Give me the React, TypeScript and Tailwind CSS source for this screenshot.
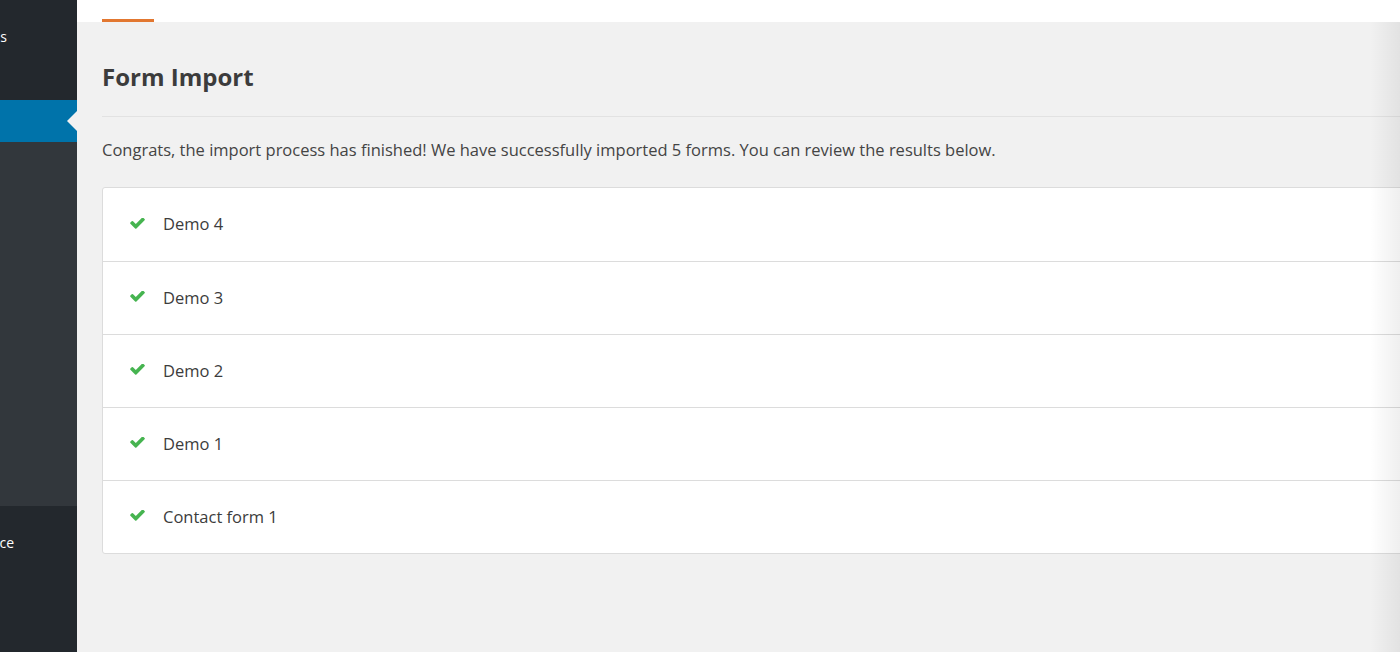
import React from "react";

const forms = ["Demo 4", "Demo 3", "Demo 2", "Demo 1", "Contact form 1"];

function Check() {
  return (
    <svg width="17" height="14" viewBox="0 0 1792 1440" className="shrink-0">
      <path
        fill="#46b450"
        d="M1671 302q0 40-28 68l-724 724-136 136q-28 28-68 28t-68-28l-136-136-362-362q-28-28-28-68t28-68l136-136q28-28 68-28t68 28l294 295 656-657q28-28 68-28t68 28l136 136q28 28 28 68z"
        transform="translate(0,-140)"
      />
    </svg>
  );
}

export default function App() {
  return (
    <div
      className="flex w-[1400px] h-[652px] overflow-hidden bg-[#f1f1f1] relative"
      style={{ fontFamily: '"Open Sans", "Noto Sans", sans-serif' }}
    >
      <aside className="w-[77px] shrink-0 flex flex-col bg-[#23282d] text-white text-[14px] overflow-hidden">
        <div className="h-[100px] relative">
          <span className="absolute right-[70px] top-[26px] whitespace-nowrap">Forms</span>
        </div>
        <div className="h-[42px] bg-[#0073aa] relative">
          <div className="absolute right-0 top-[11px] w-0 h-0 border-y-[10px] border-y-transparent border-r-[10px] border-r-[#f1f1f1]" />
        </div>
        <div className="h-[364px] bg-[#32373c]" />
        <div className="flex-1 relative">
          <span className="absolute right-[63px] top-[26px] whitespace-nowrap">Appearance</span>
        </div>
      </aside>
      <main className="flex-1 flex flex-col min-w-0">
        <div className="h-[22px] bg-white shrink-0 flex items-end px-[25px]">
          <div className="w-[52px] h-[3px] bg-[#e27730]" />
        </div>
        <div className="pl-[25px] flex flex-col">
          <h1 className="text-[24px] font-bold text-[#3c3c3c] leading-none pt-[43px] pb-[27px] border-b border-[#e2e2e2]">
            Form Import
          </h1>
          <p className="text-[16.5px] text-[#444] mt-[21px] leading-[24px] whitespace-nowrap">
            Congrats, the import process has finished! We have successfully imported 5 forms. You can review the results below.
          </p>
          <div className="mt-[25px] w-[1320px] bg-white border border-[#dcdcdc] rounded-[3px] flex flex-col">
            {forms.map((f, i) => (
              <div
                key={f}
                className={`h-[73px] flex items-center gap-[17px] pl-[26px] ${i > 0 ? "border-t border-[#dcdcdc]" : ""}`}
              >
                <Check />
                <span className="text-[16.5px] text-[#3c3c3c]">{f}</span>
              </div>
            ))}
          </div>
        </div>
      </main>
      <div className="absolute right-0 top-[22px] bottom-0 w-[30px] bg-gradient-to-l from-[#00000010] to-transparent pointer-events-none" />
    </div>
  );
}
